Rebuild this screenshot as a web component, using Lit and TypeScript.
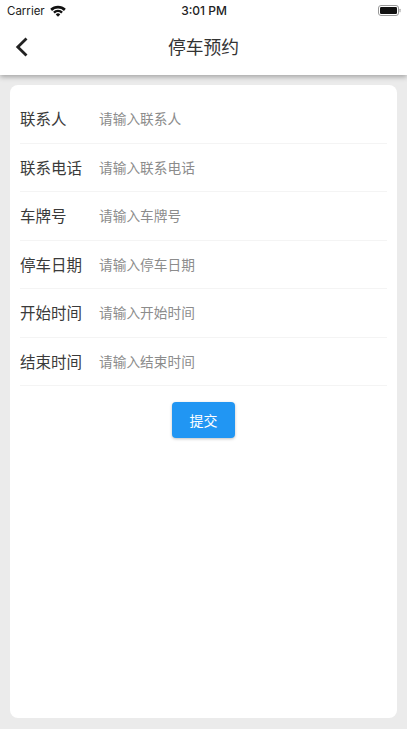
import { LitElement, html, css } from "lit";
import { customElement } from "lit/decorators.js";

const ROWS: [string, string][] = [
  ["联系人", "请输入联系人"],
  ["联系电话", "请输入联系电话"],
  ["车牌号", "请输入车牌号"],
  ["停车日期", "请输入停车日期"],
  ["开始时间", "请输入开始时间"],
  ["结束时间", "请输入结束时间"],
];

@customElement("app-root")
export class AppRoot extends LitElement {
  static styles = css`
    :host {
      display: flex;
      flex-direction: column;
      width: 407px;
      height: 729px;
      overflow: hidden;
      background: #ebebeb;
      font-family: "Inter", "Noto Sans CJK SC", sans-serif;
    }
    .top {
      flex: none;
      height: 75px;
      background: #fff;
      box-shadow: 0 2px 5px rgba(0, 0, 0, 0.3);
      position: relative;
      z-index: 1;
      display: flex;
      flex-direction: column;
    }
    .status {
      height: 21px;
      display: grid;
      grid-template-columns: 1fr auto 1fr;
      align-items: center;
      padding: 0 6px 0 7px;
      font-size: 11.5px;
      color: #222;
    }
    .status .left {
      display: flex;
      align-items: center;
      gap: 5px;
    }
    .status .time {
      font-weight: 500;
      font-size: 12px;
    }
    .status .right {
      display: flex;
      justify-content: flex-end;
    }
    .bar {
      flex: 1;
      display: flex;
      align-items: center;
      justify-content: center;
      position: relative;
      padding-bottom: 5px;
    }
    .bar .back {
      position: absolute;
      left: 15px;
      top: 16px;
    }
    .title {
      font-family: "Noto Sans CJK SC", sans-serif;
      font-size: 17.8px;
      color: #333;
    }
    .card {
      flex: 1;
      margin: 10px 10px 11px;
      padding: 10px;
      background: #fff;
      border-radius: 8px;
      display: flex;
      flex-direction: column;
    }
    .row {
      height: 48.5px;
      box-sizing: border-box;
      display: flex;
      align-items: center;
      padding-bottom: 1px;
      border-bottom: 1px solid #f4f4f4;
      font-family: "Noto Sans CJK SC", sans-serif;
    }
    .label {
      width: 79px;
      font-size: 15.5px;
      color: #3a3a3a;
    }
    .hint {
      font-size: 13.7px;
      color: #8c8c8c;
    }
    .submit {
      align-self: center;
      margin-top: 16px;
      width: 63px;
      height: 36px;
      border: none;
      border-radius: 4px;
      background: #2196f3;
      color: #fff;
      font-family: "Noto Sans CJK SC", sans-serif;
      font-size: 14px;
      padding: 0;
      box-shadow: 0 1px 3px rgba(0, 0, 0, 0.25);
    }
  `;

  render() {
    return html`
      <div class="top">
        <div class="status">
          <div class="left">
            <span>Carrier</span>
            <svg width="16" height="12" viewBox="0 0 15 11">
              <path d="M0.2 3.5A10.4 10.4 0 0 1 14.8 3.5L13.1 5.4A8 8 0 0 0 1.9 5.4Z" fill="#111" />
              <path d="M2.9 6.2A6.6 6.6 0 0 1 12.1 6.2L10.5 7.9A4.4 4.4 0 0 0 4.5 7.9Z" fill="#111" />
              <path d="M5.4 8.7A3 3 0 0 1 9.6 8.7L7.5 11Z" fill="#111" />
            </svg>
          </div>
          <span class="time">3:01 PM</span>
          <div class="right">
            <svg width="23" height="11" viewBox="0 0 23 11">
              <rect x="0.5" y="0.5" width="20" height="10" rx="2.5" fill="none" stroke="#999" />
              <rect x="2" y="2" width="17" height="7" rx="1.2" fill="#111" />
              <rect x="21.5" y="3.8" width="1" height="3.4" rx="0.5" fill="#999" />
            </svg>
          </div>
        </div>
        <div class="bar">
          <svg class="back" width="14" height="20" viewBox="0 0 14 20">
            <path d="M11.5 1.5L2.8 10L11.5 18.5" fill="none" stroke="#222" stroke-width="2.8" />
          </svg>
          <span class="title">停车预约</span>
        </div>
      </div>
      <div class="card">
        ${ROWS.map(
          ([label, hint]) => html`
            <div class="row">
              <span class="label">${label}</span>
              <span class="hint">${hint}</span>
            </div>
          `
        )}
        <button class="submit">提交</button>
      </div>
    `;
  }
}
